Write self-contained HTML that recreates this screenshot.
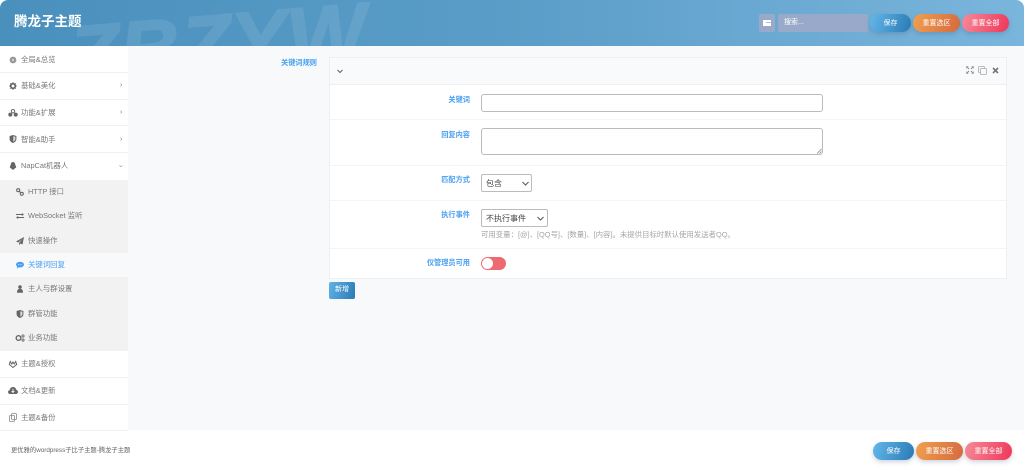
<!DOCTYPE html>
<html lang="zh-CN"><head><meta charset="utf-8"><title>腾龙子主题</title>
<style>
html,body{margin:0;padding:0;background:#fff}
body{width:1024px;height:471px;overflow:hidden;position:relative;font-family:"Liberation Sans","Noto Sans CJK SC",sans-serif;color:#555}
div,span{position:absolute;box-sizing:border-box}
svg{position:absolute;overflow:visible}
#hd{left:0;top:0;width:1024px;height:46px;border-radius:8px 8px 0 0;overflow:hidden;background:linear-gradient(90deg,#4a90bd 0%,#5a9dc8 50%,#7ab5dc 100%)}
#wm{left:68px;top:2px;font:italic 700 84px/84px "Liberation Sans",sans-serif;color:#fff;-webkit-text-stroke:1.5px #fff;opacity:.09;white-space:nowrap;transform:rotate(-4.7deg)}
#tt{left:14px;top:13px;font-size:13.5px;line-height:18px;font-weight:700;color:#fff;white-space:nowrap}
.b{height:18px;border-radius:9px;color:#fff;font-size:7px;line-height:19px;text-align:center;white-space:nowrap;box-shadow:0 2px 5px rgba(60,80,120,.25)}
.blue{background:linear-gradient(110deg,#63b7ea,#2a7ab4)}
.or{background:linear-gradient(110deg,#f0a04f,#d5693f)}
.rd{background:linear-gradient(110deg,#f58a98,#f0365a)}
#side{left:0;top:46px;width:128px;height:384px;background:#fff}
#main{left:128px;top:46px;width:896px;height:384px;background:#f8f9fb}
.it{left:0;width:128px;height:27px;border-bottom:1px solid #f2f2f2}
.t{white-space:nowrap;font-size:7.4px;line-height:12px;color:#787878}
.arr{left:120px;font-size:7px;line-height:10px;color:#777}
#sub{left:0;top:180px;width:128px;height:171px;background:#f2f2f2}
#act{left:0;top:253px;width:128px;height:24px;background:#f8f9fb}
.lb{white-space:nowrap;font-size:7.2px;line-height:12px;font-weight:700;color:#4aa0f0;text-align:right}
.ln{left:330px;width:676px;height:1px;background:#f4f4f6}
.sel{height:18px;background:#fff;border:1px solid #bbb;border-radius:2px;font-size:8px;line-height:17px;color:#444;padding-left:4px;white-space:nowrap}
</style></head><body>
<div id="hd"><div id="wm">ZBZYW</div><div id="tt">腾龙子主题</div></div>

<div style="left:759px;top:14px;width:16px;height:18px;border-radius:2px;background:#99a9c9"></div>
<svg style="left:763px;top:20px" width="8" height="6" viewBox="0 0 8 6"><path d="M0 0h8v2.200H3v.8h5v3H0z" fill="#fff"/></svg>
<div style="left:778px;top:14px;width:90px;height:18px;border-radius:2px;background:#99a9c9;color:#fff;font-size:7px;line-height:18px;padding-left:6px">搜索...</div>
<div class="b blue" style="left:870px;top:14px;width:41px">保存</div>
<div class="b or" style="left:913px;top:14px;width:47px">重置选区</div>
<div class="b rd" style="left:962px;top:14px;width:47px">重置全部</div>

<div id="side"></div>
<div id="main"></div>
<div class="it" style="top:46px"></div>
<div class="it" style="top:73px"></div>
<div class="it" style="top:99px"></div>
<div class="it" style="top:126px"></div>
<div id="sub"></div><div id="act"></div>
<div class="it" style="top:351px"></div>
<div class="it" style="top:378px"></div>
<div class="it" style="top:404px"></div>

<svg style="left:9px;top:56px" width="8" height="8" viewBox="0 0 8 8"><circle cx="4" cy="4" r="3.400" fill="#999"/><circle cx="4" cy="4" r="1" fill="#ddd"/></svg>
<span class="t" style="left:21px;top:54px">全局&amp;总览</span>
<svg style="left:9px;top:82px" width="8" height="8" viewBox="0 0 8 8"><circle cx="4" cy="4" r="2.300" fill="none" stroke="#555" stroke-width="1.500"/><path d="M4 .3v1.400M4 6.300v1.400M.3 4h1.400M6.300 4h1.400M1.400 1.400l1 1M5.600 5.600l1 1M6.600 1.400l-1 1M2.400 5.600l-1 1" stroke="#555"/></svg>
<span class="t" style="left:21px;top:80px">基础&amp;美化</span><span class="arr" style="top:81px">›</span>
<svg style="left:8px;top:109px" width="10" height="8" viewBox="0 0 10 8"><circle cx="5" cy="2.200" r="1.700" fill="none" stroke="#666" stroke-width="1"/><circle cx="2.300" cy="5.600" r="2" fill="#666"/><circle cx="7.700" cy="5.600" r="2" fill="#666"/></svg>
<span class="t" style="left:21px;top:107px">功能&amp;扩展</span><span class="arr" style="top:108px">›</span>
<svg style="left:9px;top:135px" width="8" height="8" viewBox="0 0 8 8"><path d="M4 0l3.400 1v3c0 2-1.600 3.300-3.400 4C2.200 7.300.6 6 .6 4V1z" fill="#666"/><path d="M4.300 1.200v5.500C5.600 6 6.400 5 6.400 3.800V1.800z" fill="#ddd"/></svg>
<span class="t" style="left:21px;top:134px">智能&amp;助手</span><span class="arr" style="top:135px">›</span>
<svg style="left:9px;top:162px" width="8" height="8" viewBox="0 0 8 8"><path d="M4 0C2.300 0 1.800 1.500 1.700 3 1 4 .6 5.200 1 6c.3.200.6 0 .9-.4C2 6.800 3 7.600 4 7.600s2-.8 2.100-2c.3.400.6.600.9.400.4-.8 0-2-.7-3C6.200 1.500 5.700 0 4 0z" fill="#666"/></svg>
<span class="t" style="left:21px;top:160px">NapCat机器人</span><span class="arr" style="top:161px;left:119px;transform:rotate(90deg)">›</span>

<svg style="left:16px;top:188px" width="8" height="8" viewBox="0 0 8 8"><circle cx="2.200" cy="2.200" r="1.500" fill="none" stroke="#666" stroke-width="1.100"/><circle cx="5.800" cy="5.800" r="1.500" fill="none" stroke="#666" stroke-width="1.100"/><path d="M3 3l2 2" stroke="#666"/></svg>
<span class="t" style="left:28px;top:186px">HTTP 接口</span>
<svg style="left:16px;top:213px" width="8" height="6" viewBox="0 0 8 6"><path d="M0 1.500h6.500M8 4.500H1.500" stroke="#666" stroke-width="1.100"/><path d="M5.800 0L8 1.500 5.800 3zM2.200 3L0 4.500 2.200 6z" fill="#666"/></svg>
<span class="t" style="left:28px;top:210px">WebSocket 监听</span>
<svg style="left:16px;top:237px" width="8" height="8" viewBox="0 0 8 8"><path d="M8 0L0 4.500l2.200 1L6.500 2 3 6v2l1.500-1.500L6.500 7.500z" fill="#666"/></svg>
<span class="t" style="left:28px;top:235px">快速操作</span>
<svg style="left:16px;top:261px" width="8" height="8" viewBox="0 0 8 8"><ellipse cx="4" cy="3.600" rx="4" ry="2.900" fill="#4aa0f0"/><path d="M1.200 5.500L.8 7.500 3 6.300z" fill="#4aa0f0"/><path d="M2 3.600h4" stroke="#cfe6fb" stroke-width=".7" stroke-dasharray="1 .7"/></svg>
<span class="t" style="left:28px;top:259px;color:#4aa0f0">关键词回复</span>
<svg style="left:16px;top:285px" width="8" height="8" viewBox="0 0 8 8"><circle cx="4" cy="2" r="1.800" fill="#666"/><path d="M1 7.800c0-3 1.200-4 3-4s3 1 3 4z" fill="#666"/></svg>
<span class="t" style="left:28px;top:283px">主人与群设置</span>
<svg style="left:16px;top:310px" width="8" height="8" viewBox="0 0 8 8"><path d="M4 0l3.400 1v3c0 2-1.600 3.300-3.400 4C2.200 7.300.6 6 .6 4V1z" fill="#666"/><path d="M4.300 1.200v5.500C5.600 6 6.400 5 6.400 3.800V1.800z" fill="#ddd"/></svg>
<span class="t" style="left:28px;top:308px">群管功能</span>
<svg style="left:15px;top:334px" width="10" height="8" viewBox="0 0 10 8"><circle cx="3.500" cy="4" r="2.300" fill="none" stroke="#666" stroke-width="1.400"/><circle cx="8" cy="2" r="1.100" fill="none" stroke="#666" stroke-width=".9"/><circle cx="8" cy="6" r="1.100" fill="none" stroke="#666" stroke-width=".9"/></svg>
<span class="t" style="left:28px;top:332px">业务功能</span>

<svg style="left:9px;top:360px" width="8" height="8" viewBox="0 0 8 8"><path d="M4 7.500L.3 4.500l1-3 1.500 2.500L4 2l1.200 2 1.500-2.500 1 3z" fill="none" stroke="#666" stroke-width="1"/></svg>
<span class="t" style="left:21px;top:358px">主题&amp;授权</span>
<svg style="left:8px;top:387px" width="10" height="7" viewBox="0 0 10 7"><path d="M2.200 7C.8 7 0 6 0 5c0-1 .7-1.800 1.700-1.900C1.900 1.300 3.200 0 5 0c1.600 0 2.900 1.100 3.200 2.700C9.300 3 10 3.900 10 5c0 1.100-.9 2-2.100 2z" fill="#666"/><path d="M5 1.800v3.400M3.600 4L5 5.500 6.400 4" stroke="#fff" fill="none" stroke-width=".8"/></svg>
<span class="t" style="left:21px;top:385px">文档&amp;更新</span>
<svg style="left:9px;top:413px" width="8" height="9" viewBox="0 0 8 9"><rect x=".5" y="2.500" width="5" height="6" rx="1" fill="none" stroke="#888" stroke-width=".8"/><rect x="2.500" y=".5" width="5" height="6" rx="1" fill="none" stroke="#888" stroke-width=".8"/></svg>
<span class="t" style="left:21px;top:412px">主题&amp;备份</span>

<span class="lb" style="left:260px;width:57px;top:57px">关键词规则</span>
<div style="left:329px;top:57px;width:678px;height:222px;background:#fff;border:1px solid #eeeff2"></div>
<div style="left:330px;top:58px;width:676px;height:27px;background:#f9fafb;border-bottom:1px solid #eeeff2"></div>
<svg style="left:337px;top:69px" width="6" height="5" viewBox="0 0 6 5"><path d="M.5 1l2.500 2.500L5.500 1" fill="none" stroke="#666" stroke-width="1.100"/></svg>
<svg style="left:966px;top:66px" width="8" height="8" viewBox="0 0 8 8"><path d="M.3.300h2.400L.3 2.700zM7.700.3v2.400L5.300.3zM.3 7.700V5.300l2.400 2.400zM7.700 7.700H5.300l2.400-2.400z" fill="#888"/><path d="M1.500 1.500l1.500 1.500M6.500 1.500L5 3M1.500 6.500L3 5M6.500 6.500L5 5" stroke="#888" stroke-width="1"/></svg>
<svg style="left:978px;top:66px" width="9" height="9" viewBox="0 0 9 9"><rect x=".5" y=".5" width="6" height="6" rx="1" fill="none" stroke="#aaa" stroke-width=".8"/><rect x="2.500" y="2.500" width="6" height="6" rx="1" fill="#f9fafb" stroke="#aaa" stroke-width=".8"/></svg>
<svg style="left:992px;top:67px" width="7" height="7" viewBox="0 0 7 7"><path d="M1 1l5 5M6 1L1 6" stroke="#777" stroke-width="1.600"/></svg>

<span class="lb" style="left:400px;width:70px;top:94px">关键词</span>
<div style="left:481px;top:94px;width:342px;height:18px;border:1px solid #bbb;border-radius:3px;background:#fff"></div>
<div class="ln" style="top:119px"></div>
<span class="lb" style="left:400px;width:70px;top:129px">回复内容</span>
<div style="left:481px;top:128px;width:342px;height:27px;border:1px solid #bbb;border-radius:3px;background:#fff"></div>
<svg style="left:816px;top:148px" width="6" height="6" viewBox="0 0 6 6"><path d="M5.500 1L1 5.500M5.500 3.500L3.500 5.500" stroke="#777" stroke-width=".7"/></svg>
<div class="ln" style="top:165px"></div>
<span class="lb" style="left:400px;width:70px;top:174px">匹配方式</span>
<div class="sel" style="left:481px;top:174px;width:51px">包含</div>
<svg style="left:522px;top:181px" width="7" height="5" viewBox="0 0 7 5"><path d="M.5 1l3 3 3-3" fill="none" stroke="#555" stroke-width="1"/></svg>
<div class="ln" style="top:200px"></div>
<span class="lb" style="left:400px;width:70px;top:209px">执行事件</span>
<div class="sel" style="left:481px;top:209px;width:67px">不执行事件</div>
<svg style="left:537px;top:216px" width="7" height="5" viewBox="0 0 7 5"><path d="M.5 1l3 3 3-3" fill="none" stroke="#555" stroke-width="1"/></svg>
<span style="left:481px;top:229px;font-size:7.4px;line-height:12px;color:#a5a5a5;white-space:nowrap">可用变量：[@]、[QQ号]、[数量]、[内容]。未提供目标时默认使用发送者QQ。</span>
<div class="ln" style="top:248px"></div>
<span class="lb" style="left:400px;width:70px;top:257px">仅管理员可用</span>
<div style="left:481px;top:257px;width:25px;height:13px;border-radius:7px;background:#ee6a72"></div>
<div style="left:482px;top:258px;width:11px;height:11px;border-radius:50%;background:#fff"></div>

<div style="left:329px;top:282px;width:26px;height:17px;border-radius:2px;background:linear-gradient(110deg,#5fb3e6,#2a7ab4);color:#fff;font-size:7px;line-height:16px;text-align:center">新增</div>

<span style="left:11px;top:445px;font-size:6.3px;line-height:12px;color:#666;white-space:nowrap">更优雅的wordpress子比子主题-腾龙子主题</span>
<div class="b blue" style="left:873px;top:442px;width:41px">保存</div>
<div class="b or" style="left:916px;top:442px;width:47px">重置选区</div>
<div class="b rd" style="left:965px;top:442px;width:47px">重置全部</div>
</body></html>
